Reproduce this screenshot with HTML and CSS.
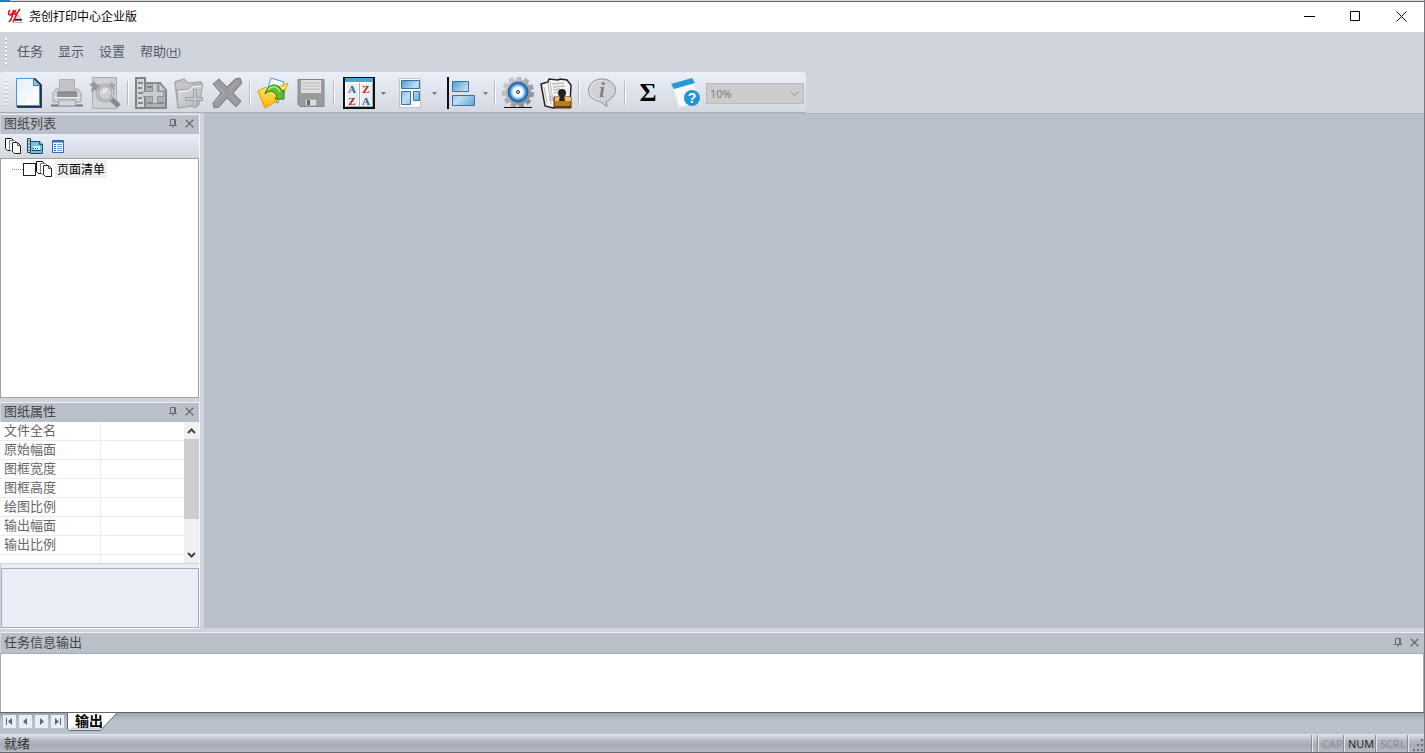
FILE: index.html
```
<!DOCTYPE html>
<html lang="zh-CN">
<head>
    <meta charset="UTF-8">
    <title>尧创打印中心企业版</title>
    <link rel="stylesheet" href="styles.css">
</head>
<body>
<svg class="defs" width="0" height="0" aria-hidden="true">
    <defs>
        <linearGradient id="gray" x1="0" y1="0" x2="1" y2="1">
            <stop offset="0" stop-color="#dedfe2"/>
            <stop offset="1" stop-color="#b0b2b6"/>
        </linearGradient>
        <linearGradient id="paper" x1="0" y1="0" x2="1" y2="1">
            <stop offset="0" stop-color="#e8f0fc"/>
            <stop offset="1" stop-color="#fdfeff"/>
        </linearGradient>
        <linearGradient id="blue" x1="0" y1="0" x2="1" y2="1">
            <stop offset="0" stop-color="#4f9bd2"/>
            <stop offset=".5" stop-color="#c3dff0"/>
            <stop offset="1" stop-color="#5ba3d4"/>
        </linearGradient>
        <linearGradient id="gold" x1="0" y1="0" x2="0" y2="1">
            <stop offset="0" stop-color="#ffec80"/>
            <stop offset="1" stop-color="#fbb800"/>
        </linearGradient>
        <linearGradient id="steel" x1="0" y1="0" x2="1" y2="1">
            <stop offset="0" stop-color="#d2d3d4"/>
            <stop offset="1" stop-color="#808285"/>
        </linearGradient>
        <radialGradient id="ring">
            <stop offset=".4" stop-color="#fff"/>
            <stop offset=".6" stop-color="#b5dafa"/>
            <stop offset=".8" stop-color="#2b86dc"/>
            <stop offset="1" stop-color="#1560ad"/>
        </radialGradient>
        <symbol id="pages" viewBox="0 0 17 16">
            <path d="M.5.5h6l2 2v10l-6 0-2-2z" fill="#fff" stroke="#111"/>
            <path d="M4.500 2.500h5l2 2v9h-5l-2-2z" fill="#fff" stroke="#777"/>
            <path d="M7.500 4.500h5l3 3v8h-6l-2-2z" fill="#fff" stroke="#222"/>
            <path d="M12.500 4.500v3h3" fill="none" stroke="#555"/>
        </symbol>
        <symbol id="pin" viewBox="0 0 8 9">
            <path d="M1.500 6V.5h5V6M0 6.500h8M4 7v2M5.500 1v5" fill="none" stroke="#6c6c6c"/>
        </symbol>
        <symbol id="close" viewBox="0 0 9 9">
            <path d="M.7.7l7.600 7.600M8.300.7L.7 8.300" fill="none" stroke="#6c6c6c" stroke-width="1.300"/>
        </symbol>
        <symbol id="drop" viewBox="0 0 5 3">
            <path d="M0 0h5L2.500 3z" fill="#777"/>
        </symbol>
    </defs>
</svg>
<div class="window">
    <div class="edge"></div>
    <header class="titlebar">
        <svg class="logo" width="16" height="16" viewBox="0 0 16 16">
            <path d="M8 7l4 1 2 5H6z" fill="#d5d5d5" stroke="#aaa" stroke-width=".5"/>
            <path d="M6 11h8v1.500H6z" fill="#222"/>
            <path d="M5 14h10v1H5z" fill="#bbb"/>
            <path d="M2 2C0 4 0 7 2 7s3-3 4-5C5 6 4 11 1 14" fill="none" stroke="#e3131b" stroke-width="1.700"/>
            <path d="M8 2C6 5 6 7 8 6s3-3 4-5C9 5 7 10 5 14" fill="none" stroke="#e3131b" stroke-width="1.500"/>
        </svg>
        <h1>尧创打印中心企业版</h1>
        <div class="controls">
            <button aria-label="最小化"><svg width="11" height="11"><path d="M0 5.500h11" stroke="#000"/></svg></button>
            <button aria-label="最大化"><svg width="11" height="11"><path d="M.5.5h9v9h-9z" fill="none" stroke="#000"/></svg></button>
            <button aria-label="关闭"><svg width="11" height="11"><path d="M.5.5l10 10M10.500.5l-10 10" stroke="#000"/></svg></button>
        </div>
    </header>
    <nav class="menubar">
        <span class="grip"></span>
        <button>任务</button>
        <button>显示</button>
        <button>设置</button>
        <button>帮助<small>(<u>H</u>)</small></button>
    </nav>
    <div class="toolbar">
        <span class="grip"></span>
        <button aria-label="新建">
            <svg width="26" height="30" viewBox="0 0 26 30">
                <path d="M.5.5h18l6 6v22H.5z" fill="url(#paper)" stroke="#4a93e8"/>
                <path d="M1 29h24V7L18.500.5" fill="none" stroke="#111" stroke-width="1.500"/>
                <path d="M23.500 8v19.500H1" fill="none" stroke="#4a93e8"/>
                <path d="M17.500 1v6.500h6.500z" fill="#8fc4f8" stroke="#3682d8"/>
            </svg>
        </button>
        <button aria-label="打印">
            <svg width="32" height="30" viewBox="0 0 32 30">
                <path d="M2 15l3-4h22l3 4v9H2z" fill="#d0d1d4" stroke="#a2a4a8"/>
                <path d="M8.500 1.500h15V16h-15z" fill="#c3c4c8" stroke="#b0b1b5"/>
                <path d="M6 14h20v5H6z" fill="#909297"/>
                <path d="M6 14h20" stroke="#77797e"/>
                <path d="M3 19.500h26" stroke="#ececee"/>
                <path d="M8 22h16l1 6H7z" fill="#d5d6d9" stroke="#97999d"/>
                <path d="M0 27.500h7M25 27.500h7" stroke="#75777c" stroke-width="2"/>
                <path d="M7 28.500h18" stroke="#a2a4a8"/>
            </svg>
        </button>
        <button aria-label="预览">
            <svg width="32" height="32" viewBox="0 0 32 32">
                <path d="M3.500.5h24v31h-24z" fill="#cfd0d4" stroke="#adaeb2"/>
                <path d="M5 3l2 4 5 1-3 3 1 4-4-2-4 2 1-5-3-3 4-1z" fill="#97999e"/>
                <path d="M23 4l1 3 4 1-3 2 1 3-3-1-3 2v-4l-2-2 3-1z" fill="#a3a5a9"/>
                <path d="M21 21l9 8" stroke="#85878c" stroke-width="5"/>
                <circle cx="16" cy="16" r="8" fill="#cdced2" stroke="#a0a2a6" stroke-width="3"/>
                <circle cx="16" cy="16" r="8" fill="none" stroke="#d6d7da"/>
                <path d="M12 17l2-5 5-1-2 5z" fill="#e8e8ea"/>
            </svg>
        </button>
        <span class="sep"></span>
        <button aria-label="添加图纸">
            <svg width="32" height="32" viewBox="0 0 32 32">
                <path d="M1 1h9v30H1z" fill="#d5d6d8" stroke="#808287" stroke-width="2"/>
                <path d="M3 6h5M3 11h4M3 16h5M3 21h4M3 26h5" stroke="#85878c" stroke-width="2"/>
                <path d="M10 6h15l6 7v18H10z" fill="#adafb3" stroke="#85878c" stroke-width="2"/>
                <path d="M24 7v7h7" fill="#d0d1d4" stroke="#909297"/>
                <path d="M12 10h5M12 26h17" stroke="#85878c" stroke-width="2"/>
                <path d="M8 17h21M20 6v21" stroke="#909297" stroke-width="6"/>
                <path d="M8 17h20M20 7v19" stroke="#cbccd0" stroke-width="4"/>
            </svg>
        </button>
        <button aria-label="添加文件夹">
            <svg width="32" height="32" viewBox="0 0 32 32">
                <path d="M2 5l9-3 4 4 13-1 1 3-4 20-20 3z" fill="#c5c6ca" stroke="#a8a9ad" stroke-width="1.500"/>
                <path d="M4 13l11-1 4-4 11-1-4 21-21 3z" fill="url(#gray)" stroke="#a2a4a8"/>
                <path d="M5 15l11-1 4-4 9-1" fill="none" stroke="#eeeef0"/>
                <path d="M12 22h18M22 12v19" stroke="#a2a4a8" stroke-width="4"/>
                <path d="M13 22h16M22 13v17" stroke="#c5c6ca" stroke-width="2"/>
            </svg>
        </button>
        <button aria-label="删除">
            <svg width="30" height="32" viewBox="0 0 30 32">
                <path d="M1 7l6-5 8 8 8-8 5-1 2 5-9 10 8 8-5 6-9-9-8 9-5 1-1-5 8-10z" fill="#999b9f" stroke="#77797d"/>
                <path d="M3 7l9 9-9 9M17 14l9-10M17 18l8 7" fill="none" stroke="#a6a8ab" stroke-width="1.500"/>
            </svg>
        </button>
        <span class="sep"></span>
        <button aria-label="打开">
            <svg width="32" height="32" viewBox="0 0 32 32">
                <path d="M14 1l13 4-6 21-13-5z" fill="#f8fbff" stroke="#5193d5"/>
                <path d="M1 14l8-4 3 3 15-5 4-2-6 15-17 10z" fill="url(#gold)" stroke="#e9a20d"/>
                <path d="M1 14l7 17 17-10" fill="none" stroke="#f2a400"/>
                <path d="M8 17c3-11 13-12 17-3l2-1v9h-9l2-3c-3-6-8-6-12-2z" fill="#5fbd35" stroke="#217d1f"/>
                <path d="M11 13c4-5 9-4 12 2" fill="none" stroke="#b5e879" stroke-width="1.500"/>
            </svg>
        </button>
        <button aria-label="保存">
            <svg width="28" height="28" viewBox="0 0 28 28">
                <path d="M1 .5h26v27H3l-2-2z" fill="#999b9f" stroke="#85878b"/>
                <path d="M4 1h20v13H4z" fill="#dedfe0"/>
                <path d="M5 4h18M5 7h18M5 10h18" stroke="#b5b6b8"/>
                <path d="M8 20h12v7H8z" fill="#ddd" stroke="#88898d"/>
                <path d="M10 21h3v5h-3z" fill="#66686c"/>
            </svg>
        </button>
        <span class="sep"></span>
        <div class="split">
            <button aria-label="排序">
                <svg class="sort" width="32" height="32" viewBox="0 0 32 32">
                    <path d="M1 1h30v30H1z" fill="#fff" stroke="#111" stroke-width="2"/>
                    <path d="M2 1h28v4H2z" fill="#48a5dc"/>
                    <path d="M4 7h11v22H4zM18 7h11v22H18z" fill="#ececee"/>
                    <path d="M16.500 6v24M29.500 6v24M3 29.500h26" stroke="#aaa"/>
                    <text x="9" y="16" fill="#28659e">A</text>
                    <text x="23" y="16" fill="#a02c1d">Z</text>
                    <text x="9" y="28" fill="#a02c1d">Z</text>
                    <text x="23" y="28" fill="#28659e">A</text>
                </svg>
            </button>
            <button class="arrow" aria-label="排序选项"><svg width="5" height="3"><use href="#drop"/></svg></button>
        </div>
        <div class="split">
            <button aria-label="布局">
                <svg width="22" height="30" viewBox="0 0 22 30">
                    <path d="M.5.5h21v29H.5z" fill="#fafbfc" stroke="#c4c4c4"/>
                    <path d="M2.500 2.500h18v8h-18zM2.500 13.500h9v13h-9zM14.500 13.500h6v9h-6z" fill="url(#blue)" stroke="#3772a6"/>
                </svg>
            </button>
            <button class="arrow" aria-label="布局选项"><svg width="5" height="3"><use href="#drop"/></svg></button>
        </div>
        <div class="split">
            <button aria-label="对齐">
                <svg width="28" height="32" viewBox="0 0 28 32">
                    <path d="M1 0v32" stroke="#07111d" stroke-width="2"/>
                    <path d="M5.500 4.500h16v10h-16zM5.500 18.500h22v10h-22z" fill="url(#blue)" stroke="#3772a6"/>
                </svg>
            </button>
            <button class="arrow" aria-label="对齐选项"><svg width="5" height="3"><use href="#drop"/></svg></button>
        </div>
        <span class="sep"></span>
        <button aria-label="设置">
            <svg width="32" height="32" viewBox="0 0 32 32">
                <circle cx="16" cy="15" r="14" fill="none" stroke="url(#steel)" stroke-width="4" stroke-dasharray="5 3"/>
                <circle cx="16" cy="15" r="13" fill="url(#steel)"/>
                <circle cx="16" cy="15" r="10" fill="url(#ring)" stroke="#3a5f80"/>
                <circle cx="16" cy="15" r="1.500" fill="#ddd" stroke="#333"/>
                <path d="M2 30.500h28" stroke="#111"/>
            </svg>
        </button>
        <button aria-label="权限">
            <svg width="32" height="32" viewBox="0 0 32 32">
                <path d="M1 7l7-2 1-3 9 1 2-1 7 1 4 5-1 18-17 5-8-2z" fill="#f5f5f5" stroke="#222" stroke-width="1.500"/>
                <path d="M4 10l3 16M8 6l3 21M10 5l3 19" stroke="#b5b5b5" fill="none"/>
                <path d="M12 7l12-1M13 10l12-1M13 13l7-1M14 16l4-1M9 20l4-1M9 23l4-1" stroke="#bdbdbd" stroke-width="1.500" fill="none"/>
                <path d="M14 20h17v11H14z" fill="#b97824" stroke="#4f2b0c"/>
                <path d="M15 20h16v4H15z" fill="#f1be62"/>
                <circle cx="22" cy="16" r="4" fill="#222"/>
                <path d="M20 18h4l1 6h-6z" fill="#222"/>
                <path d="M14 30h17" stroke="#67380e" stroke-width="2"/>
            </svg>
        </button>
        <span class="sep"></span>
        <button aria-label="信息">
            <svg class="info" width="28" height="30" viewBox="0 0 28 30">
                <path d="M14 1C6 1 .5 6 .5 12.500c0 6 5 10 11.500 11l7 5-1-5c5-2 9.500-6 9.500-11C27.500 5 21 1 14 1z" fill="#d0d1d4" stroke="#909297"/>
                <path d="M14 2.500C7 2.500 2 7 2 12.500s5 9 10 9.500" fill="none" stroke="#e8e8ea"/>
                <text x="14" y="19" fill="#7c7e83">i</text>
            </svg>
        </button>
        <span class="sep"></span>
        <button class="sum">Σ</button>
        <button aria-label="帮助">
            <svg class="help" width="32" height="32" viewBox="0 0 32 32">
                <path d="M3 10l20-6 7 22-21 4z" fill="#f7f9fb" stroke="#e6eaef"/>
                <path d="M1 7L22 1l3 5L4 12z" fill="#2699d6"/>
                <circle cx="22" cy="21" r="8" fill="#2195d3"/>
                <text x="22" y="26" fill="#fff">?</text>
            </svg>
        </button>
        <label class="zoom">
            <select disabled aria-label="缩放比例">
                <option>10%</option>
            </select>
            <svg width="9" height="6"><path d="M.5.5l4 4 4-4" fill="none" stroke="#999"/></svg>
        </label>
    </div>
    <div class="main">
        <aside class="side">
            <section class="panel sheets">
                <div class="caption">
                    <h2>图纸列表</h2>
                    <button aria-label="固定"><svg width="8" height="9"><use href="#pin"/></svg></button>
                    <button aria-label="关闭"><svg width="9" height="9"><use href="#close"/></svg></button>
                </div>
                <div class="minibar">
                    <button aria-label="页面"><svg width="17" height="16"><use href="#pages"/></svg></button>
                    <button aria-label="图纸">
                        <svg width="17" height="16" viewBox="0 0 17 16">
                            <path d="M.5.5h3v14h-3z" fill="#e5f4fb" stroke="#245"/>
                            <path d="M1 3h2M1 6h2M1 9h2M1 12h2" stroke="#245"/>
                            <path d="M3.500 3.500h9l3 3v9h-12z" fill="#75bfe0" stroke="#154f70"/>
                            <path d="M12.500 3.500v3h3z" fill="#e4f5fc" stroke="#154f70"/>
                            <path d="M6 8h7v4H6z" fill="#d0ecf8"/>
                            <path d="M5 12.500h9M6 10.500h1M8 10.500h1M10 10.500h1" stroke="#12435f"/>
                        </svg>
                    </button>
                    <button aria-label="列表">
                        <svg width="12" height="13" viewBox="0 0 12 13">
                            <path d="M.5.5h11v12H.5z" fill="#fff" stroke="#3566b5"/>
                            <path d="M0 1.500h12" stroke="#3566b5" stroke-width="2"/>
                            <path d="M2 4.500h2M2 6.500h2M2 8.500h2M2 10.500h2" stroke="#245bc0"/>
                            <path d="M5 4.500h5M5 6.500h5M5 8.500h5M5 10.500h5" stroke="#669be2"/>
                        </svg>
                    </button>
                </div>
                <div class="tree">
                    <div class="node">
                        <span class="dots"></span>
                        <input type="checkbox" id="pageList">
                        <svg width="17" height="16"><use href="#pages"/></svg>
                        <label for="pageList">页面清单</label>
                    </div>
                </div>
            </section>
            <section class="panel">
                <div class="caption">
                    <h2>图纸属性</h2>
                    <button aria-label="固定"><svg width="8" height="9"><use href="#pin"/></svg></button>
                    <button aria-label="关闭"><svg width="9" height="9"><use href="#close"/></svg></button>
                </div>
                <div class="props">
                    <table>
                        <tr><th>文件全名</th><td></td></tr>
                        <tr><th>原始幅面</th><td></td></tr>
                        <tr><th>图框宽度</th><td></td></tr>
                        <tr><th>图框高度</th><td></td></tr>
                        <tr><th>绘图比例</th><td></td></tr>
                        <tr><th>输出幅面</th><td></td></tr>
                        <tr><th>输出比例</th><td></td></tr>
                        <tr class="rest"><th></th><td></td></tr>
                    </table>
                    <div class="scroll">
                        <button aria-label="向上"><svg width="9" height="6"><path d="M1 5l3.500-3.500L8 5" fill="none" stroke="#444" stroke-width="2"/></svg></button>
                        <div class="thumb"></div>
                        <button aria-label="向下"><svg width="9" height="6"><path d="M1 1l3.500 3.500L8 1" fill="none" stroke="#444" stroke-width="2"/></svg></button>
                    </div>
                </div>
                <div class="hint"></div>
            </section>
        </aside>
        <main class="workspace"></main>
    </div>
    <section class="output">
        <div class="caption">
            <h2>任务信息输出</h2>
            <button aria-label="固定"><svg width="8" height="9"><use href="#pin"/></svg></button>
            <button aria-label="关闭"><svg width="9" height="9"><use href="#close"/></svg></button>
        </div>
        <div class="log"></div>
        <div class="tabs">
            <button class="step" aria-label="第一个"><svg width="7" height="7"><path d="M.5 0v7" stroke="#666"/><path d="M6 0v7L2 3.500z" fill="#666"/></svg></button>
            <button class="step" aria-label="上一个"><svg width="7" height="7"><path d="M5 0v7L1 3.500z" fill="#666"/></svg></button>
            <button class="step" aria-label="下一个"><svg width="7" height="7"><path d="M2 0v7l4-3.500z" fill="#666"/></svg></button>
            <button class="step" aria-label="最后一个"><svg width="7" height="7"><path d="M6.500 0v7" stroke="#666"/><path d="M1 0v7l4-3.500z" fill="#666"/></svg></button>
            <button class="tab">
                <svg width="52" height="19"><path d="M.5 0v16l2 1.500h31L50 0" fill="#fff" stroke="#666"/><path d="M3 15.500h31" stroke="#c9cfdb" stroke-width="2"/></svg>
                <span>输出</span>
            </button>
        </div>
    </section>
    <footer class="status">
        <span class="ready">就绪</span>
        <span class="cell empty"></span>
        <span class="cell caps">CAP</span>
        <span class="cell on">NUM</span>
        <span class="cell">SCRL</span>
        <span class="cell corner"><svg width="12" height="14"><path d="M9 0h2v2H9zM5 5h2v2H5zM9 5h2v2H9zM1 10h2v2H1zM5 10h2v2H5zM9 10h2v2H9z" fill="#686d77"/></svg></span>
    </footer>
</div>
</body>
</html>
```
FILE: styles.css
```
* {
    box-sizing: border-box;
}

body {
    margin: 0;
    font-family: "Noto Sans CJK SC", sans-serif;
    font-size: 13px;
    color: #444;
}

button {
    display: flex;
    align-items: center;
    justify-content: center;
    padding: 0;
    border: 0;
    background: none;
    color: inherit;
    font: inherit;
}

svg {
    display: block;
    flex: none;
}

h1, h2 {
    margin: 0;
    font-weight: normal;
}

.defs {
    position: absolute;
}

.window {
    display: flex;
    flex-direction: column;
    height: 100vh;
    min-height: 560px;
    border-right: 1px solid #77797d;
    border-bottom: 1px solid #66696f;
    background: #d0d4dd;
    overflow: hidden;
}

.edge {
    flex: none;
    height: 2px;
    border-bottom: 1px solid #666;
    background: linear-gradient(90deg, #1883d7 10px, #dadada 10px);
}

/* 标题栏 */
.titlebar {
    flex: none;
    display: flex;
    align-items: center;
    height: 30px;
    padding: 0 0 2px 8px;
    background: #fff;
}

.titlebar h1 {
    flex: 1;
    margin-left: 5px;
    font-size: 12px;
    line-height: 18px;
    color: #000;
}

.controls {
    display: flex;
}

.controls button {
    width: 46px;
    height: 28px;
}

/* 菜单 */
.menubar {
    flex: none;
    display: flex;
    align-items: center;
    gap: 15px;
    height: 40px;
    padding-left: 5px;
    color: #555963;
}

.menubar button {
    padding-bottom: 4px;
}

.grip {
    width: 2px;
    height: 28px;
    margin-right: -5px;
    background: repeating-linear-gradient(#f7f8fa 0 2px, #b4b8c0 2px 3px, transparent 3px 4px);
}

.menubar small {
    padding-top: 2px;
    font-family: "Open Sans", sans-serif;
    font-size: 11px;
}

/* 工具栏 */
.toolbar {
    flex: none;
    align-self: flex-start;
    display: flex;
    align-items: center;
    height: 41px;
    padding: 2px 2px 0 5px;
    border-bottom: 1px solid #a9afb9;
    border-radius: 3px 4px 0 0;
    background: linear-gradient(#ebeff7, #d3d8e1);
}

.toolbar .grip {
    margin-right: 3px;
}

.toolbar button {
    width: 38px;
    height: 38px;
}

.sep {
    width: 2px;
    height: 24px;
    margin: 0 3px;
    border-left: 1px solid #b5bac3;
    background: #fff;
}

.split {
    display: flex;
    padding-left: 2px;
}

.toolbar .arrow {
    width: 11px;
}

.toolbar text {
    font-family: "Liberation Serif", serif;
    font-weight: bold;
    text-anchor: middle;
}

.sort text {
    font-size: 11px;
}

.info text {
    font-size: 20px;
    font-style: italic;
}

.help text {
    font-family: "Liberation Sans", sans-serif;
    font-size: 14px;
}

.toolbar .sum {
    color: #000;
    font-family: "Liberation Serif", serif;
    font-size: 26px;
    font-weight: bold;
}

.zoom {
    position: relative;
    width: 98px;
    margin-left: 1px;
}

.zoom select {
    display: block;
    width: 100%;
    height: 21px;
    padding: 0 3px;
    appearance: none;
    border: 1px solid #bbb;
    border-radius: 0;
    background: #ccc;
    color: #777;
    opacity: 1;
    font-family: "Open Sans", sans-serif;
    font-size: 11px;
}

.zoom svg {
    position: absolute;
    top: 8px;
    right: 5px;
}

/* 主区域 */
.main {
    flex: 1;
    display: flex;
    min-height: 0;
}

.side {
    flex: none;
    display: flex;
    flex-direction: column;
    gap: 4px;
    width: 200px;
    padding-top: 1px;
}

.workspace {
    flex: 1;
    margin-left: 4px;
    border-top: 1px solid #b3b9c4;
    background: #bac0ca;
}

.panel {
    display: flex;
    flex-direction: column;
    border-right: 1px solid #f5f6f8;
}

.sheets {
    flex: 1;
    min-height: 0;
}

.caption {
    flex: none;
    display: flex;
    align-items: center;
    height: 20px;
    margin-left: 1px;
    padding: 0 5px 2px 3px;
    border-top: 1px solid #e9eef7;
    background: #bac0ca;
}

.caption h2 {
    flex: 1;
    padding-bottom: 1px;
    font-size: 13px;
    line-height: 16px;
}

.caption button {
    width: 9px;
    height: 16px;
    margin-left: 8px;
}

.minibar {
    flex: none;
    display: flex;
    align-items: center;
    gap: 5px;
    height: 24px;
    padding-left: 5px;
    background: linear-gradient(#e8edf7, #d2d7e0);
}

.minibar button {
    width: 17px;
}

.tree {
    flex: 1;
    padding: 1px 0 0 11px;
    border: 1px solid #a0a0a0;
    background: #fff;
}

.node {
    display: flex;
    align-items: center;
}

.dots {
    width: 11px;
    border-top: 1px dotted #888;
}

.node input {
    width: 13px;
    height: 13px;
    margin: 0;
    appearance: none;
    border: 1px solid #222;
    background: #fff;
}

.node label {
    margin-left: 2px;
    padding: 0 2px;
    background: #f0f0f0;
    color: #000;
    font-size: 12px;
    line-height: 18px;
}

/* 属性表 */
.props {
    display: flex;
    background: #fff;
}

.props table {
    flex: 1;
    border-spacing: 0;
    table-layout: fixed;
}

.props th, .props td {
    height: 19px;
    padding: 0;
    border-bottom: 1px solid #e6ebf5;
}

.props th {
    width: 101px;
    padding: 0 0 2px 4px;
    border-right: 1px solid #e6ebf5;
    color: #666;
    font-weight: normal;
    line-height: 16px;
    text-align: left;
}

.props .rest th, .props .rest td {
    height: 8px;
    border-bottom: 0;
}

.scroll {
    display: flex;
    flex-direction: column;
    width: 15px;
    background: #f0f0f0;
}

.scroll button {
    height: 17px;
}

.thumb {
    height: 80px;
    margin-bottom: auto;
    background: #cdcdcd;
}

.hint {
    height: 60px;
    margin: 5px 0 0 1px;
    border: 1px solid #a5abb7;
    background: #e9edf6;
    box-shadow: 0 -4px #e9edf6, 0 1px #fff;
}

/* 输出 */
.output {
    flex: none;
    margin-top: 4px;
}

.output .caption {
    height: 21px;
}

.log {
    height: 59px;
    border: 1px solid #a5abb5;
    border-bottom: 0;
    background: #fff;
}

.tabs {
    display: flex;
    gap: 3px;
    height: 22px;
    padding-left: 3px;
    border-top: 1px solid #666;
    background: linear-gradient(#9ca5b0, #b8c1cc 8px);
}

.step {
    width: 13px;
    height: 13px;
    margin-top: 2px;
    background: #e9edf6;
}

.tab {
    position: relative;
    align-items: flex-start;
    color: #000;
    font-size: 14px;
    font-weight: bold;
    line-height: 14px;
}

.tab span {
    position: absolute;
    left: 8px;
}

/* 状态栏 */
.status {
    flex: none;
    display: flex;
    align-items: center;
    height: 18px;
    background: linear-gradient(#e4e5e8, #b8bec8 6px, #a5abb6 11px, #b7bbc3);
}

.ready {
    flex: 1;
    padding-left: 4px;
    color: #333;
    line-height: 18px;
}

.cell {
    width: 32px;
    height: 17px;
    padding-left: 4px;
    border-left: 1px solid #898d94;
    box-shadow: inset 1px 0 #e4e6ea;
    color: #8c9097;
    font-family: "Open Sans", sans-serif;
    font-size: 11px;
    line-height: 18px;
}

.cell.empty {
    width: 6px;
    padding: 0;
}

.cell.caps {
    width: 26px;
}

.cell.corner {
    width: 17px;
    padding-top: 4px;
}

.cell.on {
    color: #222;
}
```
